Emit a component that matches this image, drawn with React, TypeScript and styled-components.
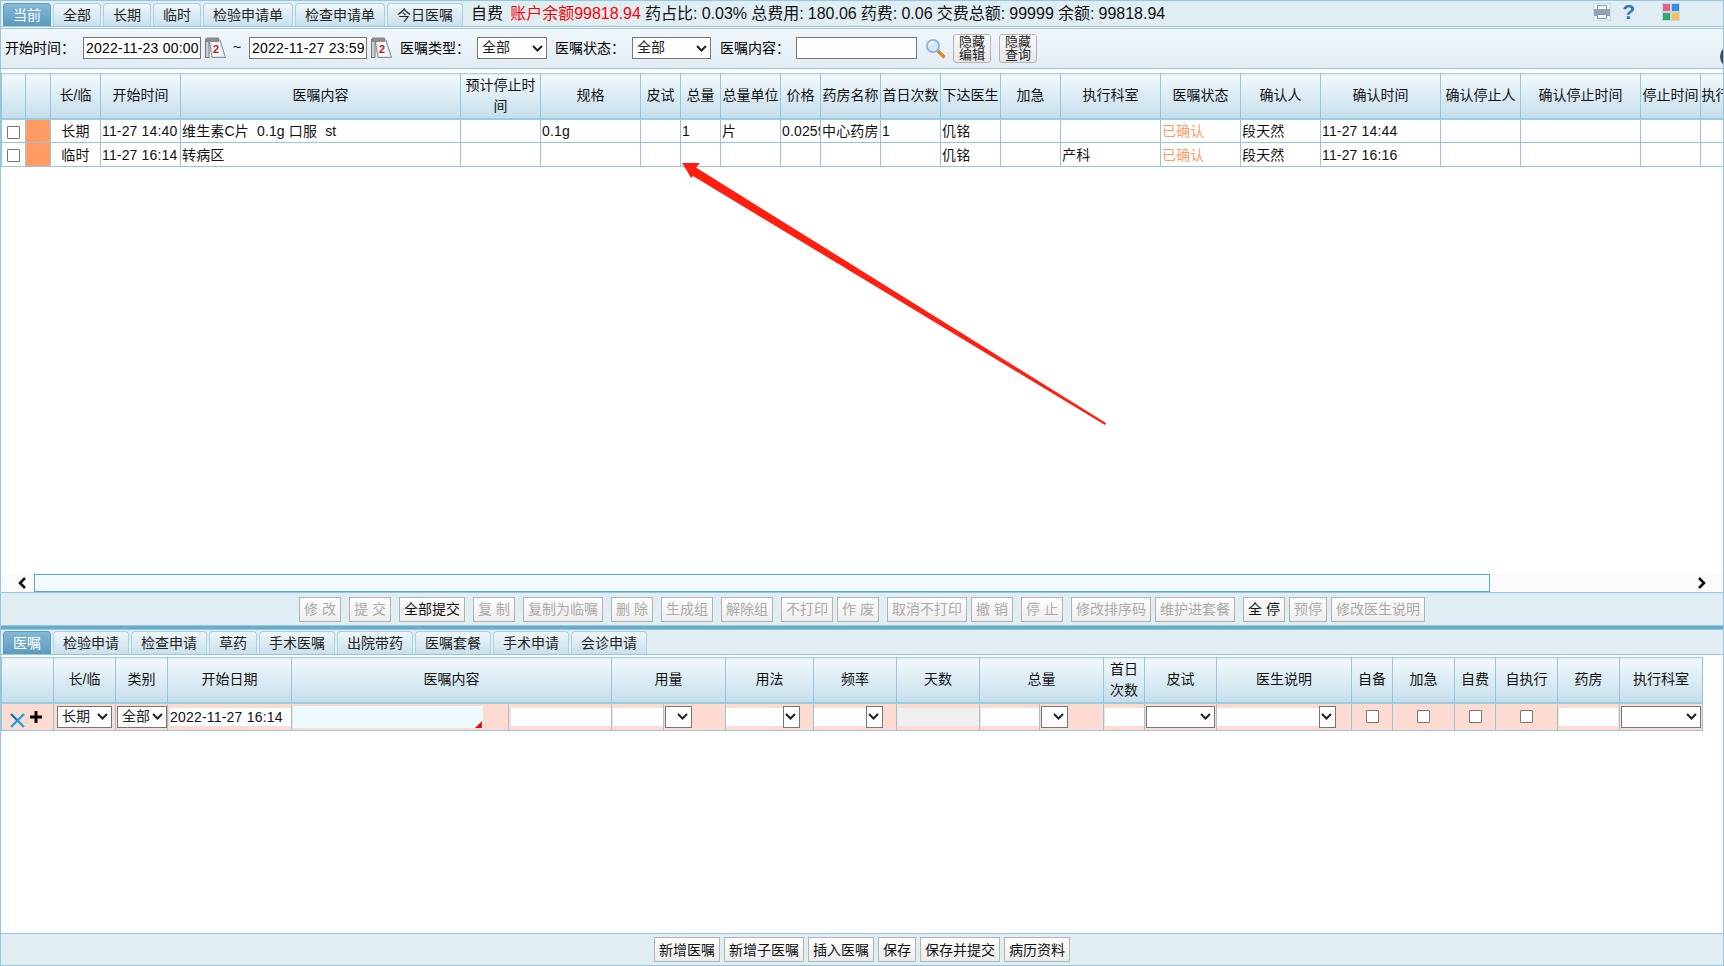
import React from "react";
import styled, { createGlobalStyle } from "styled-components";

const Global = createGlobalStyle`
  html, body { margin: 0; padding: 0; background: #fff; overflow: hidden; }
  body { font-family: "Liberation Sans", "Noto Sans CJK SC", sans-serif; font-size: 14px; color: #000; }
  * { box-sizing: border-box; }
`;

const LINE = "#96c6dc";
const CHEVRON =
  "data:image/svg+xml,%3Csvg xmlns='http://www.w3.org/2000/svg' width='11' height='7' viewBox='0 0 11 7'%3E%3Cpath d='M1 1 L5.5 5.5 L10 1' fill='none' stroke='%23222' stroke-width='2'/%3E%3C/svg%3E";

const Page = styled.div`
  position: relative;
  width: 1724px;
  height: 966px;
  overflow: hidden;
  display: flex;
  flex-direction: column;
  border-left: 1px solid ${LINE};
  border-right: 1px solid ${LINE};
`;

const TabBar = styled.div<{ $h: number }>`
  flex: none;
  display: flex;
  align-items: flex-end;
  gap: 2px;
  height: ${(p) => p.$h}px;
  padding-left: 2px;
  background: #e0edf3;
  border-top: 1px solid ${LINE};
  border-bottom: 1px solid ${LINE};
`;

const Tab = styled.div<{ $w: number; $active?: boolean }>`
  flex: none;
  width: ${(p) => p.$w}px;
  height: 23px;
  padding-bottom: 2px;
  display: flex;
  align-items: center;
  justify-content: center;
  font-size: 14px;
  color: ${(p) => (p.$active ? "#fff" : "#222")};
  border: 1px solid ${(p) => (p.$active ? "#5d9dc0" : "#a9d2e2")};
  border-bottom: none;
  border-radius: 4px 4px 0 0;
  background: ${(p) =>
    p.$active ? "linear-gradient(#84b8d6, #5a9bbe)" : "linear-gradient(#eff6fa, #c8e0ec)"};
`;

const Status = styled.div`
  align-self: center;
  margin-left: 6px;
  margin-bottom: 3px;
  font-size: 16px;
  word-spacing: -0.3px;
  white-space: nowrap;
  color: #111;
`;

const Red = styled.span`
  margin-left: 3px;
  color: #ff0000;
`;

const TopIcons = styled.div`
  margin-left: auto;
  align-self: center;
  display: flex;
  align-items: center;
  margin-right: 43px;
  margin-bottom: 3px;
`;

const QMark = styled.span`
  margin: 0 27px 0 11px;
  font: bold 21px/20px "Liberation Sans", sans-serif;
  color: #2f7fa8;
`;

const Filter = styled.div`
  flex: none;
  position: relative;
  height: 41px;
  margin-top: 1px;
  display: flex;
  align-items: center;
  padding: 0 0 1px 4px;
  background: linear-gradient(#f1f7fb, #e1edf4);
  border-top: 1px solid ${LINE};
  border-bottom: 1px solid ${LINE};
`;

const Label = styled.span<{ $ml?: number; $w?: number }>`
  flex: none;
  margin-left: ${(p) => p.$ml ?? 0}px;
  width: ${(p) => (p.$w ? `${p.$w}px` : "auto")};
  padding-bottom: 2px;
  font-size: 14px;
  white-space: nowrap;
`;

const TextBox = styled.input<{ $w: number }>`
  flex: none;
  width: ${(p) => p.$w}px;
  height: 22px;
  padding: 0 0 0 2px;
  border: 1px solid #767676;
  background: #fff;
  font: 14px "Liberation Sans", "Noto Sans CJK SC", sans-serif;
  letter-spacing: 0.2px;
  color: #000;
  outline: none;
`;

const Picker = styled.select<{ $w: number; $ml?: number }>`
  flex: none;
  appearance: none;
  width: ${(p) => p.$w}px;
  height: 22px;
  margin-left: ${(p) => p.$ml ?? 0}px;
  padding: 0 0 2px 4px;
  border: 1px solid #767676;
  border-radius: 0;
  background: #fff url("${CHEVRON}") no-repeat right 3px center;
  font: 14px "Liberation Sans", "Noto Sans CJK SC", sans-serif;
  color: #222;
`;

const IconSlot = styled.span<{ $ml?: number; $mt?: number }>`
  flex: none;
  display: inline-flex;
  margin-left: ${(p) => p.$ml ?? 0}px;
  margin-top: ${(p) => p.$mt ?? 0}px;
`;

const HideBtn = styled.div<{ $ml: number }>`
  flex: none;
  width: 38px;
  height: 29px;
  margin-left: ${(p) => p.$ml}px;
  border: 1px solid #b4b4b4;
  border-radius: 3px;
  background: linear-gradient(#fbfbfb, #e6e6e6);
  font-size: 13px;
  line-height: 13px;
  text-align: center;
  color: #222;
  padding-top: 0;
`;

const EdgeMark = styled.div`
  position: absolute;
  right: -20px;
  top: 16px;
  width: 23px;
  height: 23px;
  border-radius: 50%;
  background: #3b4a50;
`;

const GridWrap = styled.div<{ $top: number; $h?: number }>`
  flex: none;
  height: ${(p) => (p.$h ? `${p.$h}px` : "auto")};
  margin-top: ${(p) => p.$top}px;
  overflow: hidden;
`;

const Grid = styled.table<{ $w: number }>`
  table-layout: fixed;
  width: ${(p) => p.$w}px;
  border-collapse: collapse;
`;

const Col = styled.col<{ $w: number }>`
  width: ${(p) => p.$w}px;
`;

const Th = styled.th`
  height: 45px;
  padding: 0;
  font-size: 14px;
  font-weight: normal;
  line-height: 21px;
  text-align: center;
  color: #111;
  overflow: hidden;
  white-space: normal;
  border: 1px solid ${LINE};
  border-top: 1px solid #a9d2e2;
  border-bottom: 2px solid #9ccadf;
  background: linear-gradient(#f3f9fc, #c4deeb);
`;

const Td = styled.td<{ $center?: boolean; $color?: string; $fill?: string }>`
  height: 24px;
  padding: 0 0 0 ${(p) => (p.$center ? 0 : 1)}px;
  font-size: 14px;
  line-height: 22px;
  letter-spacing: 0.15px;
  white-space: pre;
  overflow: hidden;
  text-align: ${(p) => (p.$center ? "center" : "left")};
  color: ${(p) => p.$color ?? "#111"};
  background: ${(p) => p.$fill ?? "#fff"};
  border: 1px solid ${LINE};
`;

const Check = styled.span`
  display: inline-block;
  width: 13px;
  height: 13px;
  border: 1px solid #767676;
  border-radius: 1px;
  background: #fff;
  vertical-align: middle;
`;

const ScrollBar = styled.div`
  flex: none;
  display: flex;
  align-items: center;
  height: 18px;
  background: #fafafa;
  position: relative;
`;

const ScrollArrow = styled.span`
  flex: none;
  width: 33px;
  display: flex;
  justify-content: center;
  padding-left: 8px;
`;

const Thumb = styled.div`
  flex: none;
  width: 1456px;
  height: 18px;
  background: #f3f9fc;
  border: 1px solid #59a3c6;
`;

const ScrollEnd = styled.span`
  margin-left: auto;
  margin-right: 16px;
  display: flex;
`;

const ActionBar = styled.div<{ $h: number }>`
  flex: none;
  height: ${(p) => p.$h}px;
  display: flex;
  align-items: center;
  justify-content: center;
  background: #e0edf3;
  border-top: 1px solid ${LINE};
  border-bottom: 1px solid ${LINE};
`;

const ActionBtn = styled.div<{ $w: number; $ml?: number; $on?: boolean }>`
  flex: none;
  width: ${(p) => p.$w}px;
  height: 25px;
  padding-bottom: 2px;
  margin-left: ${(p) => p.$ml ?? 0}px;
  display: flex;
  align-items: center;
  justify-content: center;
  white-space: pre;
  font-size: 14px;
  color: ${(p) => (p.$on ? "#111" : "#aaaaaa")};
  border: 1px solid #b3b3b3;
  background: linear-gradient(#ffffff, #ececec);
`;

const Divider = styled.div`
  flex: none;
  height: 3px;
  background: #67abcd;
`;

const CellFill = styled.div`
  display: flex;
  align-items: center;
  height: 26px;
`;

const Field = styled.div<{ $w: number; $ml?: number; $bg?: string; $h?: number }>`
  position: relative;
  flex: none;
  width: ${(p) => p.$w}px;
  height: ${(p) => p.$h ?? 18}px;
  margin-left: ${(p) => p.$ml ?? 0}px;
  background: ${(p) => p.$bg ?? "#fff"};
  font-size: 14px;
  line-height: 18px;
  letter-spacing: 0.2px;
  white-space: nowrap;
  color: #111;
`;

const Corner = styled.span`
  position: absolute;
  right: 1px;
  bottom: 0;
  width: 0;
  height: 0;
  border-left: 7px solid transparent;
  border-bottom: 7px solid #e31414;
`;

const EditTd = styled.td`
  height: 28px;
  padding: 0;
  overflow: hidden;
  background: #fddbd1;
  border: 1px solid ${LINE};
`;

const CheckCell = styled(CellFill)`
  justify-content: center;
`;

const Spacer = styled.div`
  flex: 1 1 auto;
  background: #fff;
`;

const Arrow = styled.svg`
  position: absolute;
  left: -1px;
  top: 0;
  pointer-events: none;
`;

const Calendar = () => (
  <svg width="21" height="23" viewBox="0 0 21 23">
    <path d="M4 3 L15 3 L20.5 20.5 L7 20.5 Z" fill="#d4e4ef" stroke="#8e8e8e" />
    <path d="M7 4 L14 4 L18 19 L8 19 Z" fill="#f4f8fb" />
    <rect x="0.5" y="2.5" width="3.5" height="18" fill="#cfcfcf" stroke="#7a7a7a" />
    <rect x="1" y="0.5" width="13" height="4.5" fill="#8c8c8c" />
    <text x="11" y="15.5" fontSize="11" fontWeight="bold" fontFamily="Liberation Sans" fill="#b81e1e" textAnchor="middle">2</text>
  </svg>
);

const Search = () => (
  <svg width="21" height="21" viewBox="0 0 21 21">
    <path d="M12.5 12.5 L18.5 18.5" stroke="#d98a32" strokeWidth="3.4" strokeLinecap="round" />
    <circle cx="8" cy="8" r="6.2" fill="#cfe8f7" stroke="#8fb6cf" strokeWidth="1.8" />
    <path d="M4.5 7 A4 4 0 0 1 8 4" stroke="#fff" strokeWidth="1.6" fill="none" />
  </svg>
);

const Printer = () => (
  <svg width="18" height="18" viewBox="0 0 18 18">
    <rect x="0.5" y="0.5" width="17" height="17" fill="#e9f1f7" stroke="#cfdfe9" />
    <rect x="4.5" y="2.5" width="9" height="4" fill="#f5f8fa" stroke="#8ba4bb" />
    <rect x="1.5" y="6.5" width="15" height="6" fill="#95a4b0" stroke="#8ba4bb" />
    <rect x="4.5" y="11.5" width="9" height="4" fill="#f5f8fa" stroke="#7f9ec0" />
  </svg>
);

const Tiles = () => (
  <svg width="18" height="18" viewBox="0 0 18 18">
    <rect width="18" height="18" fill="#c6d5df" />
    <rect x="1" y="1" width="7" height="7" fill="#e8618c" />
    <rect x="10" y="1" width="7" height="7" fill="#2d8fe0" />
    <rect x="1" y="10" width="7" height="7" fill="#2fae6b" />
    <rect x="10" y="10" width="7" height="7" fill="#f4c04f" />
  </svg>
);

const ChevronL = () => (
  <svg width="10" height="12" viewBox="0 0 10 12">
    <path d="M8 1 L3 6 L8 11" fill="none" stroke="#111" strokeWidth="2.6" />
  </svg>
);

const ChevronR = () => (
  <svg width="10" height="12" viewBox="0 0 10 12">
    <path d="M2 1 L7 6 L2 11" fill="none" stroke="#111" strokeWidth="2.6" />
  </svg>
);

const Cross = () => (
  <svg width="15" height="15" viewBox="0 0 15 15">
    <path d="M1 1 L14 14 M14 1 L1 14" stroke="#18a6e6" strokeWidth="2.4" />
    <path d="M1 1 L7 7" stroke="#0c5f9a" strokeWidth="1.3" />
  </svg>
);

const Plus = () => (
  <svg width="14" height="14" viewBox="0 0 14 14">
    <path d="M7 1 V13 M1 7 H13" stroke="#000" strokeWidth="3" />
  </svg>
);

const topTabs: [string, number][] = [
  ["当前", 48], ["全部", 48], ["长期", 48], ["临时", 48],
  ["检验申请单", 90], ["检查申请单", 90], ["今日医嘱", 76],
];

const orderCols: [string, number][] = [
  ["", 24], ["", 25], ["长/临", 50], ["开始时间", 80], ["医嘱内容", 280], ["预计停止时间", 80],
  ["规格", 100], ["皮试", 40], ["总量", 40], ["总量单位", 60], ["价格", 40], ["药房名称", 60],
  ["首日次数", 60], ["下达医生", 60], ["加急", 60], ["执行科室", 100], ["医嘱状态", 80],
  ["确认人", 80], ["确认时间", 120], ["确认停止人", 80], ["确认停止时间", 120], ["停止时间", 60], ["执行", 30],
];

const orders = [
  ["长期", "11-27 14:40", "维生素C片  0.1g 口服  st", "", "0.1g", "", "1", "片", "0.0259", "中心药房", "1", "仉铭", "", "", "已确认", "段天然", "11-27 14:44"],
  ["临时", "11-27 16:14", "转病区", "", "", "", "", "", "", "", "", "仉铭", "", "产科", "已确认", "段天然", "11-27 16:16"],
];

const actions: [string, number, number, boolean?][] = [
  ["修 改", 42, 0], ["提 交", 42, 8], ["全部提交", 66, 8, true], ["复 制", 42, 8],
  ["复制为临嘱", 80, 8], ["删 除", 42, 8], ["生成组", 52, 8], ["解除组", 52, 8],
  ["不打印", 52, 8], ["作 废", 42, 4], ["取消不打印", 80, 8], ["撤 销", 42, 4],
  ["停 止", 42, 8], ["修改排序码", 80, 8], ["维护进套餐", 80, 4], ["全 停", 42, 8, true],
  ["预停", 38, 4], ["修改医生说明", 94, 4],
];

const lowerTabs: [string, number][] = [
  ["医嘱", 48], ["检验申请", 76], ["检查申请", 76], ["草药", 48], ["手术医嘱", 76],
  ["出院带药", 76], ["医嘱套餐", 76], ["手术申请", 76], ["会诊申请", 76],
];

const editHead: [string, number][] = [
  ["", 1], ["长/临", 1], ["类别", 1], ["开始日期", 1], ["医嘱内容", 2],
  ["用量", 2], ["用法", 1], ["频率", 1], ["天数", 1], ["总量", 2],
  ["首日次数", 1], ["皮试", 1], ["医生说明", 1], ["自备", 1], ["加急", 1],
  ["自费", 1], ["自执行", 1], ["药房", 1], ["执行科室", 1],
];

const editWidths = [52, 62, 52, 124, 217, 103, 52, 62, 88, 83, 83, 60, 64, 41, 72, 135, 41, 62, 41, 62, 62, 83];

const bottomBtns: [string, number, number][] = [
  ["新增医嘱", 66, 0], ["新增子医嘱", 80, 4], ["插入医嘱", 66, 4], ["保存", 38, 4],
  ["保存并提交", 80, 4], ["病历资料", 66, 4],
];

const orderWidth = orderCols.reduce((s, c) => s + c[1], 0);
const editWidth = editWidths.reduce((s, w) => s + w, 0);

export default function App() {
  return (
    <Page>
      <Global />
      <TabBar $h={27}>
        {topTabs.map(([t, w], i) => (
          <Tab key={t} $w={w} $active={i === 0}>{t}</Tab>
        ))}
        <Status>
          自费 <Red>账户余额99818.94</Red> 药占比: 0.03% 总费用: 180.06 药费: 0.06 交费总额: 99999 余额: 99818.94
        </Status>
        <TopIcons>
          <Printer />
          <QMark>?</QMark>
          <Tiles />
        </TopIcons>
      </TabBar>

      <Filter>
        <Label $w={78}>开始时间：</Label>
        <TextBox $w={118} defaultValue="2022-11-23 00:00" readOnly />
        <IconSlot $ml={4}><Calendar /></IconSlot>
        <Label $ml={7} $w={16}>~</Label>
        <TextBox $w={118} defaultValue="2022-11-27 23:59" readOnly />
        <IconSlot $ml={4}><Calendar /></IconSlot>
        <Label $ml={8} $w={77}>医嘱类型：</Label>
        <Picker $w={70} defaultValue="全部"><option>全部</option></Picker>
        <Label $ml={8} $w={77}>医嘱状态：</Label>
        <Picker $w={79} defaultValue="全部"><option>全部</option></Picker>
        <Label $ml={9} $w={76}>医嘱内容：</Label>
        <TextBox $w={121} />
        <IconSlot $ml={8}><Search /></IconSlot>
        <HideBtn $ml={7}>隐藏<br />编辑</HideBtn>
        <HideBtn $ml={8}>隐藏<br />查询</HideBtn>
        <EdgeMark />
      </Filter>

      <GridWrap $top={4} $h={501}>
        <Grid $w={orderWidth}>
          <colgroup>{orderCols.map((c, i) => <Col key={i} $w={c[1]} />)}</colgroup>
          <thead>
            <tr>{orderCols.map((c, i) => <Th key={i}>{c[0]}</Th>)}</tr>
          </thead>
          <tbody>
            {orders.map((r, ri) => (
              <tr key={ri}>
                <Td $center><Check /></Td>
                <Td $fill="#ff9c66" />
                {r.map((v, i) => (
                  <Td key={i} $center={i === 0} $color={v === "已确认" ? "#ff9c66" : undefined}>{v}</Td>
                ))}
                {orderCols.slice(r.length + 2).map((_, i) => <Td key={`e${i}`} />)}
              </tr>
            ))}
          </tbody>
        </Grid>
      </GridWrap>

      <ScrollBar>
        <ScrollArrow><ChevronL /></ScrollArrow>
        <Thumb />
        <ScrollEnd><ChevronR /></ScrollEnd>
      </ScrollBar>

      <ActionBar $h={34}>
        {actions.map(([t, w, ml, on]) => (
          <ActionBtn key={t} $w={w} $ml={ml} $on={on}>{t}</ActionBtn>
        ))}
      </ActionBar>
      <Divider />

      <TabBar $h={26}>
        {lowerTabs.map(([t, w], i) => (
          <Tab key={t} $w={w} $active={i === 0}>{t}</Tab>
        ))}
      </TabBar>

      <GridWrap $top={2}>
        <Grid $w={editWidth}>
          <colgroup>{editWidths.map((w, i) => <Col key={i} $w={w} />)}</colgroup>
          <thead>
            <tr>
              {editHead.map(([t, span], i) => (
                <Th key={i} colSpan={span}>{t === "首日次数" ? <>首日<br />次数</> : t}</Th>
              ))}
            </tr>
          </thead>
          <tbody>
            <tr>
              <EditTd><CellFill><IconSlot $ml={8} $mt={7}><Cross /></IconSlot><IconSlot $ml={4}><Plus /></IconSlot></CellFill></EditTd>
              <EditTd><CellFill><Picker $w={55} $ml={3} defaultValue="长期"><option>长期</option></Picker></CellFill></EditTd>
              <EditTd><CellFill><Picker $w={50} $ml={1} defaultValue="全部"><option>全部</option></Picker></CellFill></EditTd>
              <EditTd><CellFill><Field $w={121} $ml={2}>2022-11-27 16:14</Field></CellFill></EditTd>
              <EditTd><CellFill><Field $w={190} $ml={1} $bg="#eef9fd" $h={22}><Corner /></Field></CellFill></EditTd>
              <EditTd><CellFill><Field $w={100} $ml={2} /></CellFill></EditTd>
              <EditTd><CellFill><Field $w={50} $ml={1} /></CellFill></EditTd>
              <EditTd><CellFill><Picker $w={27} $ml={1} /></CellFill></EditTd>
              <EditTd><CellFill><Field $w={57} /><Picker $w={17} /></CellFill></EditTd>
              <EditTd><CellFill><Field $w={52} /><Picker $w={17} /></CellFill></EditTd>
              <EditTd><CellFill><Field $w={81} $ml={1} $bg="#efefef" /></CellFill></EditTd>
              <EditTd><CellFill><Field $w={59} $ml={1} /></CellFill></EditTd>
              <EditTd><CellFill><Picker $w={27} $ml={1} /></CellFill></EditTd>
              <EditTd><CellFill><Field $w={39} $ml={1} /></CellFill></EditTd>
              <EditTd><CellFill><Picker $w={69} $ml={1} /></CellFill></EditTd>
              <EditTd><CellFill><Field $w={102} /><Picker $w={17} /></CellFill></EditTd>
              <EditTd><CheckCell><Check /></CheckCell></EditTd>
              <EditTd><CheckCell><Check /></CheckCell></EditTd>
              <EditTd><CheckCell><Check /></CheckCell></EditTd>
              <EditTd><CheckCell><Check /></CheckCell></EditTd>
              <EditTd><CellFill><Field $w={59} $ml={1} /></CellFill></EditTd>
              <EditTd><CellFill><Picker $w={80} $ml={1} /></CellFill></EditTd>
            </tr>
          </tbody>
        </Grid>
      </GridWrap>

      <Spacer />

      <ActionBar $h={33}>
        {bottomBtns.map(([t, w, ml]) => (
          <ActionBtn key={t} $w={w} $ml={ml} $on>{t}</ActionBtn>
        ))}
      </ActionBar>

      <Arrow width="1724" height="966" viewBox="0 0 1724 966">
        <polygon points="682,163 700,163 696,167.5 1106,423 1105,425 693,176 691,178 687,171" fill="#ff1e10" />
      </Arrow>
    </Page>
  );
}
